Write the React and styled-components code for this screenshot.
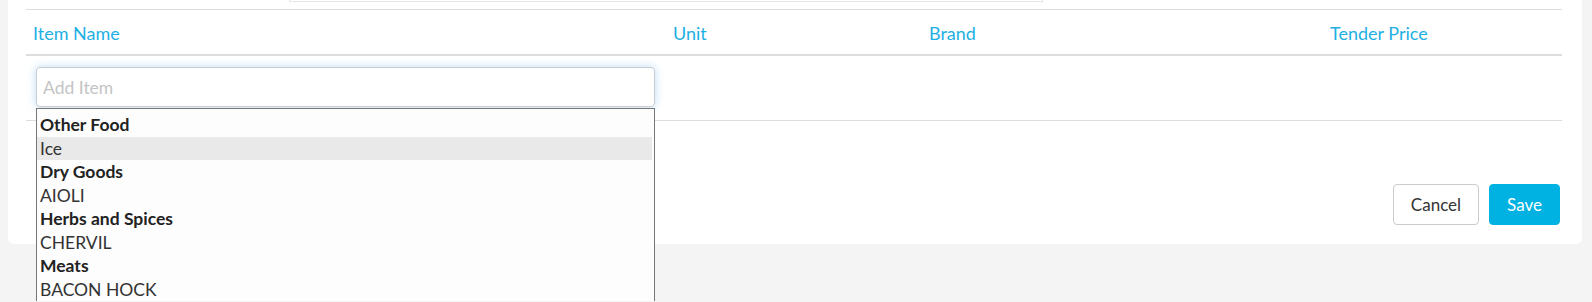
import React from 'react'
import styled, { createGlobalStyle } from 'styled-components'

const GlobalStyle = createGlobalStyle`
  body {
    margin: 0;
    background: #f4f4f4;
    font-family: Lato, "Open Sans", "Liberation Sans", sans-serif;
  }
`

const Page = styled.div`
  min-height: 100vh;
  padding: 0 10px 0 8px;
`

const Card = styled.div`
  background: #fff;
  border-radius: 0 0 6px 6px;
  padding: 0 20px 19px 18px;
`

const TopStub = styled.div`
  margin-left: 263px;
  width: 752px;
  height: 1px;
  border: 1px solid #e6e6e6;
  border-top: none;
  margin-bottom: 7px;
`

const HeadRow = styled.div`
  display: grid;
  grid-template-columns: 640px 256px 401px 1fr;
  height: 44px;
  border-top: 1px solid #dddddd;
  border-bottom: 2px solid #dddddd;
  align-items: center;
`

const HeadCell = styled.div`
  padding-left: 7px;
  padding-top: 1px;
  color: #1eafe3;
  font-size: 18px;
`

const BodyRow = styled.div`
  height: 53px;
  padding: 11px 0 0 10px;
  border-bottom: 1px solid #dddddd;
`

const Field = styled.div`
  position: relative;
  width: 619px;
`

const Input = styled.input`
  box-sizing: border-box;
  width: 100%;
  height: 40px;
  border: 1px solid #c9ccd0;
  border-radius: 4px;
  padding: 0 6px;
  font-family: inherit;
  font-size: 17.5px;
  outline: none;
  box-shadow: 0 0 8px rgba(102, 175, 233, 0.45);
  &::placeholder {
    color: #c4c4c4;
  }
`

const Menu = styled.ul`
  position: absolute;
  top: 41px;
  left: 0;
  width: 619px;
  box-sizing: border-box;
  margin: 0;
  padding: 4px 2px 0 0;
  list-style: none;
  background: #fdfdfd;
  border: 1px solid #767676;
  border-bottom: none;
  z-index: 2;
`

const MenuItem = styled.li`
  line-height: 23.5px;
  padding-left: 3px;
  font-size: 17.5px;
  color: ${p => (p.group ? '#222' : '#333')};
  font-weight: ${p => (p.group ? 700 : 400)};
  background: ${p => (p.active ? '#e9e9e9' : 'transparent')};
`

const Actions = styled.div`
  display: flex;
  justify-content: flex-end;
  gap: 10px;
  margin-top: 63px;
  padding-right: 2px;
`

const Button = styled.button`
  height: 41px;
  padding: 0 17px;
  border-radius: 4px;
  font-family: inherit;
  font-size: 17px;
  border: 1px solid ${p => (p.primary ? '#00b2e2' : '#cccccc')};
  background: ${p => (p.primary ? '#00b2e2' : '#fff')};
  color: ${p => (p.primary ? '#fff' : '#333')};
`

const columns = ['Item Name', 'Unit', 'Brand', 'Tender Price']

const options = [
  { label: 'Other Food', group: true },
  { label: 'Ice', active: true },
  { label: 'Dry Goods', group: true },
  { label: 'AIOLI' },
  { label: 'Herbs and Spices', group: true },
  { label: 'CHERVIL' },
  { label: 'Meats', group: true },
  { label: 'BACON HOCK' },
]

export default function App() {
  return (
    <>
      <GlobalStyle />
      <Page>
        <Card>
          <TopStub />
          <HeadRow>
            {columns.map(c => (
              <HeadCell key={c}>{c}</HeadCell>
            ))}
          </HeadRow>
          <BodyRow>
            <Field>
              <Input placeholder="Add Item" />
              <Menu>
                {options.map(o => (
                  <MenuItem key={o.label} group={o.group} active={o.active}>
                    {o.label}
                  </MenuItem>
                ))}
              </Menu>
            </Field>
          </BodyRow>
          <Actions>
            <Button>Cancel</Button>
            <Button primary>Save</Button>
          </Actions>
        </Card>
      </Page>
    </>
  )
}
